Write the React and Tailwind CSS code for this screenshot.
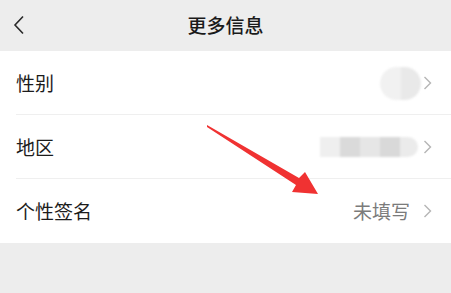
import React from "react"

const font = { fontFamily: '"Noto Sans CJK SC", "Noto Sans", sans-serif' }

function ChevronRight() {
  return (
    <svg width="9" height="14" viewBox="0 0 9 14" className="shrink-0">
      <path d="M1.5 1 L7.5 7 L1.5 13" fill="none" stroke="#b5b5b5" strokeWidth="1.4" />
    </svg>
  )
}

function Row({ label, children, divider }) {
  return (
    <div className="relative flex h-[64px] items-center pl-4 pr-[19px]">
      <span className="text-[19px] text-[#1c1c1c]">{label}</span>
      <div className="ml-auto flex items-center">
        {children}
        <ChevronRight />
      </div>
      {divider && <div className="absolute bottom-0 left-4 right-0 h-px bg-[#efefef]" />}
    </div>
  )
}

export default function App() {
  return (
    <div className="relative h-[293px] w-[451px] overflow-hidden bg-[#ededed]" style={font}>
      {/* header */}
      <div className="relative flex h-[51px] items-center justify-center">
        <svg width="14" height="20" viewBox="0 0 14 20" className="absolute left-[12px] top-[15px]">
          <path d="M11 1.5 L3 10 L11 18.5" fill="none" stroke="#2a2a2a" strokeWidth="1.6" />
        </svg>
        <span className="text-[19px] font-medium text-[#1a1a1a]">更多信息</span>
      </div>

      <div className="bg-white">
        <Row label="性别" divider>
          <div className="mr-[2px] flex h-[33px] w-[41px] overflow-hidden rounded-full blur-[1px]">
            <div className="flex-1 bg-[#f1f1f1]" />
            <div className="flex-1 bg-[#e9e9e9]" />
          </div>
        </Row>
        <Row label="地区" divider>
          <div className="mr-[5px] flex h-[20px] w-[98px] overflow-hidden rounded-r-full blur-[1px]">
            <div className="w-[20px] bg-[#efefef]" />
            <div className="w-[20px] bg-[#dadada]" />
            <div className="w-[20px] bg-[#e6e6e6]" />
            <div className="w-[20px] bg-[#d9d9d9]" />
            <div className="w-[18px] bg-[#ebebeb]" />
          </div>
        </Row>
        <Row label="个性签名">
          <span className="mr-[13px] text-[19px] text-[#7b7b7b]">未填写</span>
        </Row>
      </div>

      {/* annotation arrow */}
      <svg className="pointer-events-none absolute inset-0" width="451" height="293" viewBox="0 0 451 293">
        <polygon
          points="207,125 299,178 305,172 318,194 292,192 296,185 207,127"
          fill="#f03232"
        />
      </svg>
    </div>
  )
}
